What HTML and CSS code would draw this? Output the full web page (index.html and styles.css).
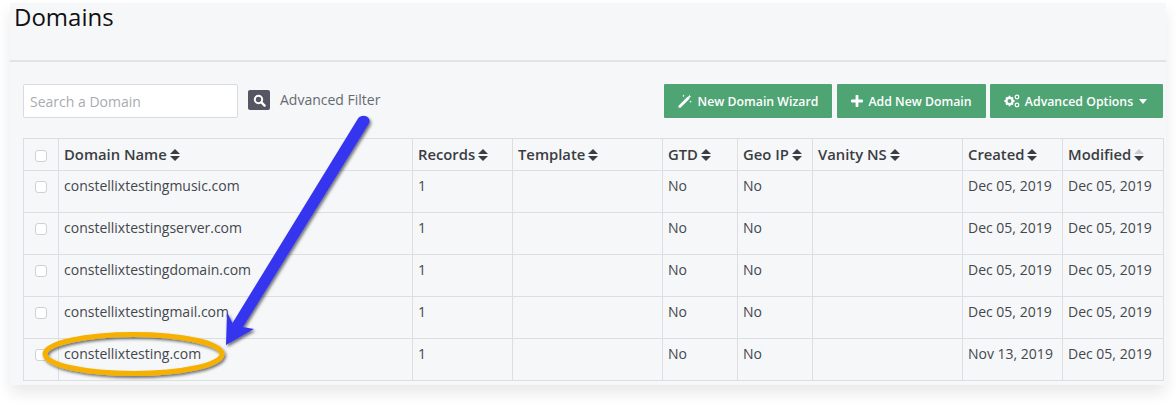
FILE: index.html
```html
<!DOCTYPE html>
<html lang="en">
<head>
<meta charset="utf-8">
<title>Domains</title>
<link rel="stylesheet" href="styles.css">
</head>
<body>
<main class="panel">
  <header class="page-head"><h1>Domains</h1></header>
  <section class="toolbar">
    <div class="search-group">
      <input class="search" type="text" placeholder="Search a Domain">
      <button class="search-btn" aria-label="Search">
        <svg width="13" height="13" viewBox="0 0 13 13"><circle cx="5.500" cy="5.500" r="3.700" fill="none" stroke="#fff" stroke-width="2"/><path d="M8.400 8.400 11.600 11.600" stroke="#fff" stroke-width="2.400" stroke-linecap="round"/></svg>
      </button>
      <span class="filter">Advanced Filter</span>
    </div>
    <div class="actions">
      <button class="btn btn-wizard">
        <svg width="15" height="14" viewBox="0 0 15 14"><path d="M1.800 12.400 10 4.200" stroke="#fff" stroke-width="2.800" stroke-linecap="round"/><path d="M11.500 .6 12 1.900 13.300 2.400 12 2.900 11.500 4.200 11 2.900 9.700 2.400 11 1.900ZM5.500 .6 5.900 1.500 6.800 1.900 5.900 2.300 5.500 3.200 5.100 2.300 4.200 1.900 5.100 1.500ZM12.600 6.400 13 7.300 13.900 7.700 13 8.100 12.600 9 12.200 8.100 11.300 7.700 12.200 7.300Z" fill="#fff"/></svg>
        New Domain Wizard
      </button>
      <button class="btn btn-add">
        <svg width="12" height="12" viewBox="0 0 12 12"><path d="M6 1v10M1 6h10" stroke="#fff" stroke-width="2.800" stroke-linecap="round"/></svg>
        Add New Domain
      </button>
      <button class="btn btn-options">
        <svg width="16" height="14" viewBox="0 0 16 14"><circle cx="5.500" cy="7" r="3.100" fill="none" stroke="#fff" stroke-width="2.300"/><path d="M5.500 1.800v2M5.500 10.200v2M.4 7h2M8.600 7h2M2 3.500l1.400 1.400M7.600 9.100 9 10.500M2 10.500l1.400-1.400M7.600 4.900 9 3.500" stroke="#fff" stroke-width="1.800"/><circle cx="13" cy="3" r="1.800" fill="none" stroke="#fff" stroke-width="1.300"/><circle cx="13" cy="11" r="1.800" fill="none" stroke="#fff" stroke-width="1.300"/></svg>
        Advanced Options
        <span class="caret"></span>
      </button>
    </div>
  </section>
  <div class="table-wrap">
    <table class="domains">
      <colgroup>
        <col class="c-check"><col class="c-name"><col class="c-records"><col class="c-template"><col class="c-gtd"><col class="c-geo"><col class="c-vanity"><col class="c-created"><col class="c-modified">
      </colgroup>
      <thead>
        <tr>
          <th class="check"><span class="box"></span></th>
          <th>Domain Name<span class="sort"></span></th>
          <th>Records<span class="sort"></span></th>
          <th>Template<span class="sort"></span></th>
          <th>GTD<span class="sort"></span></th>
          <th>Geo IP<span class="sort"></span></th>
          <th>Vanity NS<span class="sort"></span></th>
          <th>Created<span class="sort"></span></th>
          <th>Modified<span class="sort sort-desc"></span></th>
        </tr>
      </thead>
      <tbody>
        <tr><td class="check"><span class="box"></span></td><td>constellixtestingmusic.com</td><td>1</td><td></td><td>No</td><td>No</td><td></td><td>Dec 05, 2019</td><td>Dec 05, 2019</td></tr>
        <tr><td class="check"><span class="box"></span></td><td>constellixtestingserver.com</td><td>1</td><td></td><td>No</td><td>No</td><td></td><td>Dec 05, 2019</td><td>Dec 05, 2019</td></tr>
        <tr><td class="check"><span class="box"></span></td><td>constellixtestingdomain.com</td><td>1</td><td></td><td>No</td><td>No</td><td></td><td>Dec 05, 2019</td><td>Dec 05, 2019</td></tr>
        <tr><td class="check"><span class="box"></span></td><td>constellixtestingmail.com</td><td>1</td><td></td><td>No</td><td>No</td><td></td><td>Dec 05, 2019</td><td>Dec 05, 2019</td></tr>
        <tr><td class="check"><span class="box"></span></td><td>constellixtesting.com</td><td>1</td><td></td><td>No</td><td>No</td><td></td><td>Nov 13, 2019</td><td>Dec 05, 2019</td></tr>
      </tbody>
    </table>
  </div>
</main>
<svg class="annotation" width="1176" height="405" viewBox="0 0 1176 405" aria-hidden="true">
  <defs>
    <filter id="shade" x="-20%" y="-20%" width="140%" height="140%">
      <feDropShadow dx="1.500" dy="2" stdDeviation="1.500" flood-color="#000" flood-opacity=".55"/>
    </filter>
  </defs>
  <g filter="url(#shade)">
    <path d="M358 118.500 C360.500 115 366 115 368.500 118 C370.500 120.500 369.500 123 368 125 L243 327 L254 329 L226 345 L227 312 L232.500 323 Z" fill="#3636f0"/>
  </g>
  <g filter="url(#shade)">
    <ellipse cx="133.500" cy="354" rx="88.500" ry="19.500" fill="none" stroke="#f6b000" stroke-width="5"/>
  </g>
</svg>
</body>
</html>
```
FILE: styles.css
```css
* { box-sizing: border-box; }
html, body { margin: 0; height: 405px; overflow: hidden; background: #fff; }
body {
  padding: 3px 10px 0;
  font-family: "Open Sans", "Noto Sans", sans-serif;
  color: #3a3d42;
  position: relative;
}
.panel {
  width: 1156px;
  height: 382px;
  background: #f6f7f9;
  box-shadow: 0 8px 14px rgba(0, 0, 0, .09);
  padding-bottom: 5px;
}
.page-head {
  height: 59px;
  border-bottom: 2px solid #e2e3e5;
  padding: 0 4px;
}
.page-head h1 {
  margin: 0;
  font-size: 24px;
  line-height: 28px;
  font-weight: 400;
  color: #111;
}
.toolbar {
  display: flex;
  justify-content: space-between;
  align-items: flex-start;
  padding: 22px 3px 0 13px;
  height: 76px;
}
.search-group { display: flex; align-items: center; height: 34px; }
.search {
  width: 215px;
  height: 34px;
  border: 1px solid #d9dbdf;
  border-radius: 2px;
  background: #fff;
  padding: 0 6px;
  font: 14px "Open Sans", sans-serif;
  color: #555;
}
.search::placeholder { color: #a9abaf; opacity: 1; }
.search-btn {
  margin-left: 10px;
  width: 22px;
  height: 20px;
  border: 0;
  border-radius: 2px;
  background: #545664;
  padding: 0;
  display: flex;
  align-items: center;
  justify-content: center;
  margin-top: -2px;
}
.filter { margin-left: 10px; font-size: 14px; color: #666a70; margin-top: -3px; }
.actions { display: flex; gap: 5px; }
.btn {
  height: 34px;
  border: 0;
  border-radius: 1px;
  background: #4fa474;
  color: #fff;
  font: 600 12.300px "Open Sans", sans-serif;
  display: flex;
  align-items: center;
  justify-content: center;
  gap: 5px;
  padding: 0;
}
.btn-wizard { width: 168px; }
.btn-add { width: 149px; }
.btn-options { width: 173px; margin-left: -1px; padding-right: 2px; }
.caret {
  width: 0;
  height: 0;
  border-left: 4.500px solid transparent;
  border-right: 4.500px solid transparent;
  border-top: 5px solid #fff;
  margin-left: 1px;
}
.table-wrap { padding: 0 3px 0 13px; }
.domains {
  border-collapse: collapse;
  table-layout: fixed;
  width: 1140px;
  font-size: 14px;
}
.c-check { width: 35px; }
.c-name { width: 354px; }
.c-records { width: 100px; }
.c-template { width: 150px; }
.c-gtd, .c-geo { width: 75px; }
.c-vanity { width: 150px; }
.c-created { width: 100px; }
.c-modified { width: 101px; }
.domains th, .domains td {
  border: 1px solid #dcdee1;
  text-align: left;
  vertical-align: top;
  padding: 5px 5px;
  white-space: nowrap;
}
.domains th {
  height: 32px;
  font-size: 14.800px;
  line-height: 20px;
  font-weight: 600;
  color: #3a3d42;
  padding-top: 5px;
}
.domains td { height: 42px; color: #44474c; padding-top: 5px; }
.domains .check { padding: 10px 0 0 11px; }
.domains th.check { padding-top: 11px; }
.box {
  display: block;
  width: 12px;
  height: 12px;
  border: 1px solid #cfd1d5;
  border-radius: 3px;
  background: #fff;
}
.sort {
  display: inline-block;
  position: relative;
  width: 10px;
  height: 12px;
  margin-left: 3px;
  vertical-align: -1px;
}
.sort::before, .sort::after {
  content: "";
  position: absolute;
  left: 0;
  border-left: 5px solid transparent;
  border-right: 5px solid transparent;
}
.sort::before { top: 0; border-bottom: 5px solid #3a3d42; }
.sort::after { bottom: 0; border-top: 5px solid #3a3d42; }
.sort-desc::before { border-bottom-color: #c9cbce; }
.annotation { position: absolute; left: 0; top: 0; pointer-events: none; }
```
